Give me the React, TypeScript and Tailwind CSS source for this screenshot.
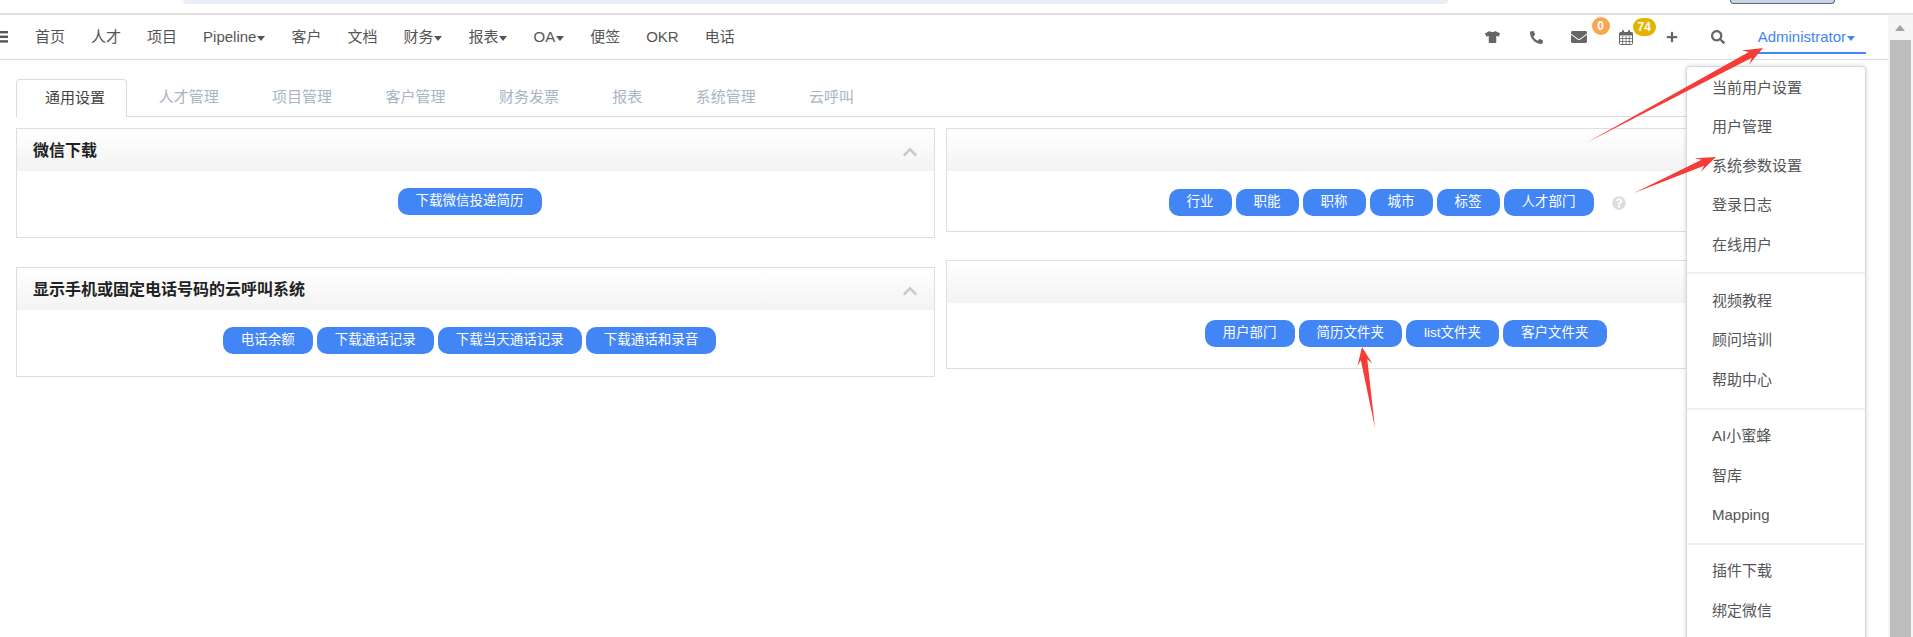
import React from "react";
import { FaTshirt, FaPhone, FaEnvelope, FaPlus, FaSearch, FaQuestionCircle, FaChevronUp } from "react-icons/fa";

const FONT = "[font-family:'Liberation_Sans','Noto_Sans_CJK_SC',sans-serif]";

function Caret({ color = "border-t-[#555]" }: { color?: string }) {
  return <span className={`ml-[1px] mt-[2px] inline-block h-0 w-0 border-x-[4px] border-t-[5px] border-x-transparent ${color}`} />;
}

function Btn({ label }: { label: string }) {
  return (
    <span className="flex h-[27px] items-center whitespace-nowrap rounded-[10px] bg-[#4285f4] px-[18px] text-[13.5px] text-white">
      {label}
    </span>
  );
}

function Panel({ title, heightClass, bodyClass, children }: { title?: string; heightClass: string; bodyClass: string; children: React.ReactNode }) {
  return (
    <section className={`w-[919px] border border-[#dedede] bg-white ${heightClass}`}>
      <header className="flex h-[42px] items-center justify-between bg-gradient-to-b from-[#ffffff] to-[#f3f3f3] pl-[16px] pr-[16px]">
        <h3 className="pt-[1px] text-[16px] font-bold text-[#222]">{title}</h3>
        <FaChevronUp className="mt-[3px] h-[16px] w-[16px] text-[#c9c9c9]" />
      </header>
      <div className={`flex justify-center gap-[4px] pt-[17px] ${bodyClass}`}>{children}</div>
    </section>
  );
}

function Arrow({ t, p, l, w, n }: { t: [number, number]; p: [number, number]; l: number; w: number; n: number }) {
  const dx = p[0] - t[0];
  const dy = p[1] - t[1];
  const len = Math.hypot(dx, dy);
  const ux = dx / len;
  const uy = dy / len;
  const nx = -uy;
  const ny = ux;
  const pt = (a: number, b: number) => `${p[0] - ux * a + nx * b},${p[1] - uy * a + ny * b}`;
  const pts = [`${t[0]},${t[1]}`, pt(l * 0.72, n / 2), pt(l, w / 2), `${p[0]},${p[1]}`, pt(l, -w / 2), pt(l * 0.72, -n / 2)].join(" ");
  return <polygon points={pts} fill="#f53c36" />;
}

function Calendar() {
  return (
    <svg viewBox="0 0 14 15" className="h-[15px] w-[14px]" fill="none">
      <rect x="0.5" y="2.5" width="13" height="12" rx="1" stroke="#666" />
      <rect x="0.5" y="2.5" width="13" height="3" fill="#666" />
      <path d="M0.5 8.5H13.5M0.5 11.5H13.5M3.7 6V14.5M7 6V14.5M10.3 6V14.5" stroke="#666" strokeWidth="0.8" />
      <rect x="3" y="0" width="2" height="4" rx="1" fill="#666" />
      <rect x="9" y="0" width="2" height="4" rx="1" fill="#666" />
    </svg>
  );
}

const NAV: { label: string; caret?: boolean }[] = [
  { label: "首页" }, { label: "人才" }, { label: "项目" }, { label: "Pipeline", caret: true },
  { label: "客户" }, { label: "文档" }, { label: "财务", caret: true }, { label: "报表", caret: true },
  { label: "OA", caret: true }, { label: "便签" }, { label: "OKR" }, { label: "电话" },
];

const TABS = ["人才管理", "项目管理", "客户管理", "财务发票", "报表", "系统管理", "云呼叫"];

const MENU = [
  ["当前用户设置", "用户管理", "系统参数设置", "登录日志", "在线用户"],
  ["视频教程", "顾问培训", "帮助中心"],
  ["AI小蜜蜂", "智库", "Mapping"],
  ["插件下载", "绑定微信", ""],
];

export default function App() {
  return (
    <div className={`relative flex h-[637px] w-full flex-col overflow-hidden bg-white text-[15px] text-[#555] ${FONT}`}>
      {/* browser strip */}
      <div className="flex h-[15px] shrink-0 items-start border-b-2 border-[#e0e0e0] pl-[183px]">
        <div className="h-[4px] w-[1265px] rounded-b-[10px] bg-[#e9edf8]" />
        <div className="ml-[282px] h-[4px] w-[105px] rounded-b-[12px] border-x border-b border-[#666] bg-[#c6d5ec]" />
      </div>

      <div className="flex min-h-0 flex-1">
        <main className="relative min-w-0 flex-1">
          {/* nav */}
          <nav className="flex h-[45px] items-center border-b border-[#dcdcdc]">
            <svg viewBox="0 0 8 12" className="h-[12px] w-[8px] shrink-0" fill="#555">
              <rect y="0" width="8" height="2.4" />
              <rect y="4.6" width="8" height="2.4" />
              <rect y="9.2" width="8" height="2.4" />
            </svg>
            <ul className="ml-[14px] flex items-center">
              {NAV.map((n) => (
                <li key={n.label} className="flex items-center whitespace-nowrap px-[13px]">
                  {n.label}
                  {n.caret && <Caret />}
                </li>
              ))}
            </ul>
            <div className="ml-auto flex h-full items-center text-[#666]">
              <FaTshirt className="h-[12px] w-[15px]" />
              <FaPhone className="ml-[30px] h-[13px] w-[13px] -scale-x-100" />
              <span className="relative ml-[28px] flex">
                <FaEnvelope className="h-[16px] w-[16px]" />
                <span className="absolute left-[21px] top-[-12px] flex h-[18px] w-[18px] items-center justify-center rounded-full bg-[#f9a64f] text-[12px] font-bold text-white">0</span>
              </span>
              <span className="relative ml-[32px] flex">
                <Calendar />
                <span className="absolute left-[14px] top-[-12px] flex h-[18px] w-[23px] items-center justify-center rounded-full bg-[#e2b400] text-[12px] font-bold text-white">74</span>
              </span>
              <FaPlus className="ml-[33px] h-[12px] w-[12px]" />
              <FaSearch className="ml-[33px] h-[14px] w-[14px]" />
              <div className="ml-[28px] flex h-[39px] items-center self-start border-b-2 border-[#4285f4] pl-[5px] pr-[11px] pt-[7px] text-[#4285f4]">
                Administrator
                <Caret color="border-t-[#4285f4]" />
              </div>
              <div className="w-[22px]" />
            </div>
          </nav>

          <div className="px-[16px]">
            {/* tabs */}
            <div className="mt-[19px] flex h-[38px] w-[1849px] border-b border-[#dcdcdc]">
              <div className="mr-[5px] flex h-[38px] items-center rounded-t-[4px] border-x border-t border-[#dcdcdc] bg-white pl-[28px] pr-[21px] text-[#444]">通用设置</div>
              {TABS.map((t) => (
                <div key={t} className="flex items-center whitespace-nowrap px-[26.7px] text-[#a9b4c6]">{t}</div>
              ))}
            </div>

            {/* panels */}
            <div className="mt-[11px] flex gap-[11px]">
              <div className="flex flex-col gap-[29px]">
                <Panel title="微信下载" heightClass="h-[110px]" bodyClass="pr-[12px]">
                  <Btn label="下载微信投递简历" />
                </Panel>
                <Panel title="显示手机或固定电话号码的云呼叫系统" heightClass="h-[110px]" bodyClass="pr-[12px]">
                  <Btn label="电话余额" />
                  <Btn label="下载通话记录" />
                  <Btn label="下载当天通话记录" />
                  <Btn label="下载通话和录音" />
                </Panel>
              </div>
              <div className="flex flex-col gap-[28px]">
                <Panel heightClass="h-[104px]" bodyClass="items-center pr-[17px] !pt-[18px]">
                  <Btn label="行业" />
                  <Btn label="职能" />
                  <Btn label="职称" />
                  <Btn label="城市" />
                  <Btn label="标签" />
                  <Btn label="人才部门" />
                  <FaQuestionCircle className="ml-[14px] h-[14px] w-[14px] text-[#dddddd]" />
                </Panel>
                <Panel heightClass="h-[109px]" bodyClass="">
                  <Btn label="用户部门" />
                  <Btn label="简历文件夹" />
                  <Btn label="list文件夹" />
                  <Btn label="客户文件夹" />
                </Panel>
              </div>
            </div>
          </div>

          {/* dropdown */}
          <div className="absolute left-[1686px] top-[51px] w-[180px] rounded-[4px] border border-[#d5d8e0] bg-white pt-[1.5px] shadow-[0_0_4px_rgba(120,125,150,0.35)]">
            {MENU.map((group, i) => (
              <div key={i} className={i > 0 ? "mt-[8px] border-t-2 border-[#f0f0f0] pt-[7.5px]" : ""}>
                {group.map((m, j) => (
                  <div key={j} className="flex h-[39.2px] items-center pl-[25px] text-[#555]">{m}</div>
                ))}
              </div>
            ))}
          </div>
        </main>

        {/* scrollbar */}
        <aside className="flex w-[25px] shrink-0 flex-col items-start bg-[#f5f5f5] pl-[2px]">
          <div className="ml-[5px] mt-[10px] h-0 w-0 border-x-[5.5px] border-b-[6px] border-x-transparent border-b-[#a3a3a3]" />
          <div className="mt-[9px] w-[21px] flex-1 bg-[#bdbdbd]" />
        </aside>
      </div>

      {/* annotation arrows */}
      <svg className="pointer-events-none absolute inset-0 h-[637px] w-[1913px]" viewBox="0 0 1913 637">
        <Arrow t={[1586, 143]} p={[1763, 48]} l={20} w={16} n={6.5} />
        <Arrow t={[1634, 193]} p={[1716, 157]} l={20} w={15} n={6.5} />
        <Arrow t={[1375, 428]} p={[1362, 347]} l={18} w={15} n={6.5} />
      </svg>
    </div>
  );
}
